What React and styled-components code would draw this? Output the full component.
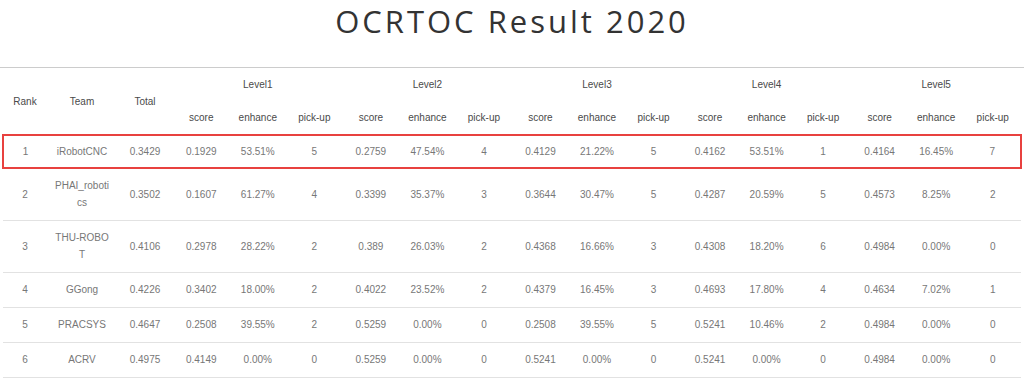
import React from 'react';
import styled, { createGlobalStyle } from 'styled-components';

const GlobalStyle = createGlobalStyle`
  html, body {
    margin: 0;
    padding: 0;
    background: #fff;
  }
`;

const Page = styled.div`
  width: 1024px;
  font-family: "Liberation Sans", Arial, sans-serif;
`;

const Title = styled.h1`
  margin: 0 0 26px;
  padding-top: 1px;
  text-align: center;
  font-family: "Open Sans", "DejaVu Sans", sans-serif;
  font-weight: 400;
  font-size: 31px;
  line-height: 40px;
  letter-spacing: 3px;
  color: #333;
`;

const TableWrap = styled.div`
  border-top: 1px solid #ccc;
  padding: 0 2px;
`;

const Table = styled.table`
  width: 100%;
  border-collapse: collapse;
  table-layout: fixed;
  font-size: 10px;
  line-height: 17px;
`;

const Th = styled.th`
  font-weight: 400;
  color: #4a4a4a;
  text-align: center;
  vertical-align: middle;
  padding: 8px 7px;
`;

const Td = styled.td`
  color: #777;
  text-align: center;
  vertical-align: middle;
  padding: 8px 7px 9px;
  word-break: break-all;
  border-bottom: 1px solid #e2e2e2;
`;

const Row = styled.tr`
  ${p => p.$highlight && `
    td {
      border-top: 2px solid #e8413f;
      border-bottom: 2px solid #e8413f;
      padding: 7px 7px 7px;
    }
    td:first-child { border-left: 2px solid #e8413f; }
    td:last-child { border-right: 2px solid #e8413f; }
  `}
`;

const levels = [1, 2, 3, 4, 5];

const rows = [
  ['1', 'iRobotCNC', '0.3429', '0.1929', '53.51%', '5', '0.2759', '47.54%', '4', '0.4129', '21.22%', '5', '0.4162', '53.51%', '1', '0.4164', '16.45%', '7'],
  ['2', 'PHAI_robotics', '0.3502', '0.1607', '61.27%', '4', '0.3399', '35.37%', '3', '0.3644', '30.47%', '5', '0.4287', '20.59%', '5', '0.4573', '8.25%', '2'],
  ['3', 'THU-ROBOT', '0.4106', '0.2978', '28.22%', '2', '0.389', '26.03%', '2', '0.4368', '16.66%', '3', '0.4308', '18.20%', '6', '0.4984', '0.00%', '0'],
  ['4', 'GGong', '0.4226', '0.3402', '18.00%', '2', '0.4022', '23.52%', '2', '0.4379', '16.45%', '3', '0.4693', '17.80%', '4', '0.4634', '7.02%', '1'],
  ['5', 'PRACSYS', '0.4647', '0.2508', '39.55%', '2', '0.5259', '0.00%', '0', '0.2508', '39.55%', '5', '0.5241', '10.46%', '2', '0.4984', '0.00%', '0'],
  ['6', 'ACRV', '0.4975', '0.4149', '0.00%', '0', '0.5259', '0.00%', '0', '0.5241', '0.00%', '0', '0.5241', '0.00%', '0', '0.4984', '0.00%', '0'],
];

export default function App() {
  return (
    <Page>
      <GlobalStyle />
      <Title>OCRTOC Result 2020</Title>
      <TableWrap>
        <Table>
          <colgroup>
            <col style={{ width: 44 }} />
            <col style={{ width: 70 }} />
            <col style={{ width: 56 }} />
            {Array.from({ length: 15 }).map((_, i) => <col key={i} />)}
          </colgroup>
          <thead>
            <tr>
              <Th rowSpan={2}>Rank</Th>
              <Th rowSpan={2}>Team</Th>
              <Th rowSpan={2}>Total</Th>
              {levels.map(l => <Th key={l} colSpan={3}>Level{l}</Th>)}
            </tr>
            <tr>
              {levels.map(l => (
                <React.Fragment key={l}>
                  <Th>score</Th>
                  <Th>enhance</Th>
                  <Th>pick-up</Th>
                </React.Fragment>
              ))}
            </tr>
          </thead>
          <tbody>
            {rows.map((r, i) => (
              <Row key={i} $highlight={i === 0}>
                {r.map((c, j) => <Td key={j}>{c}</Td>)}
              </Row>
            ))}
          </tbody>
        </Table>
      </TableWrap>
    </Page>
  );
}
